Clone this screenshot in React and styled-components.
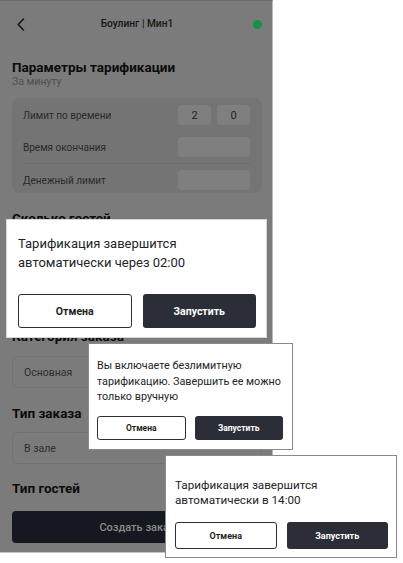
import styled, { createGlobalStyle } from "styled-components";

const GlobalStyle = createGlobalStyle`
  html, body {
    margin: 0;
    padding: 0;
    background: #fff;
  }
  body {
    font-family: Roboto, "Noto Sans", "Liberation Sans", sans-serif;
  }
  * {
    box-sizing: border-box;
  }
`;

const dialogs = [
  {
    id: "timer",
    text: "Тарификация завершится автоматически через 02:00",
    box: { left: 6, top: 219, width: 261, height: 119 },
    pad: "14px 10px 9px 11px",
    font: 13,
    line: 19,
    btnH: 34,
    btnFont: 10.5,
    gap: 11,
    border: "#d6d6d6",
  },
  {
    id: "unlimited",
    text: "Вы включаете безлимитную тарификацию. Завершить ее можно только вручную",
    box: { left: 88, top: 343, width: 205, height: 107 },
    pad: "14px 9px 9px 8px",
    font: 10.8,
    line: 15.5,
    btnH: 24,
    btnFont: 8.5,
    gap: 9,
    border: "#8a8a8a",
  },
  {
    id: "endtime",
    text: "Тарификация завершится автоматически в 14:00",
    box: { left: 165, top: 455, width: 232, height: 103 },
    pad: "22px 8px 8px 9px",
    font: 11.7,
    line: 15,
    btnH: 27,
    btnFont: 9,
    gap: 10,
    border: "#8a8a8a",
  },
];

function App() {
  return (
    <Page>
      <GlobalStyle />
      <Phone>
        <Header>
          <BackButton>
            <svg width="8" height="13" viewBox="0 0 8 13" fill="none">
              <path
                d="M6.5 1 L1.2 6.5 L6.5 12"
                stroke="#151515"
                strokeWidth="1.5"
                strokeLinecap="round"
                strokeLinejoin="round"
              />
            </svg>
          </BackButton>
          <HeaderTitle>Боулинг | Мин1</HeaderTitle>
          <StatusDot />
        </Header>

        <PageTitle>Параметры тарификации</PageTitle>
        <Subtitle>За минуту</Subtitle>

        <Card>
          <Row>
            <RowLabel>Лимит по времени</RowLabel>
            <Inputs>
              <Field $w={33}>2</Field>
              <Field $w={33}>0</Field>
            </Inputs>
          </Row>
          <Row $gap>
            <RowLabel>Время окончания</RowLabel>
            <Field $w={72} />
          </Row>
          <Divider />
          <Row>
            <RowLabel>Денежный лимит</RowLabel>
            <Field $w={72} />
          </Row>
        </Card>

        <SectionTitle $mt={17}>Сколько гостей</SectionTitle>
        <Select $mt={10} />
        <Select $mt={10} />

        <SectionTitle $mt={18}>Категория заказа</SectionTitle>
        <Select $mt={12}>Основная</Select>

        <SectionTitle $mt={17}>Тип заказа</SectionTitle>
        <Select $mt={11}>В зале</Select>

        <SectionTitle $mt={16}>Тип гостей</SectionTitle>

        <CreateButton>Создать заказ</CreateButton>
      </Phone>

      {dialogs.map((d) => (
        <Dialog key={d.id} $box={d.box} $pad={d.pad} $border={d.border}>
          <DialogText $font={d.font} $line={d.line}>
            {d.text}
          </DialogText>
          <DialogActions $gap={d.gap}>
            <CancelButton $h={d.btnH} $font={d.btnFont}>
              Отмена
            </CancelButton>
            <StartButton $h={d.btnH} $font={d.btnFont}>
              Запустить
            </StartButton>
          </DialogActions>
        </Dialog>
      ))}
    </Page>
  );
}

export default App;

const Page = styled.div`
  position: relative;
  width: 403px;
  height: 563px;
  background: #fff;
  overflow: hidden;
`;

const Phone = styled.div`
  width: 273px;
  height: 553px;
  display: flex;
  flex-direction: column;
  padding: 0 10px 10px 12px;
  background: #7b7b7b;
  border-top: 1px solid #6a6a6a;
  border-right: 1px solid #b8b8b8;
  border-bottom: 1px solid #c6c6c6;
  overflow: hidden;
`;

const Header = styled.header`
  height: 45px;
  flex-shrink: 0;
  display: grid;
  grid-template-columns: 24px 1fr 24px;
  align-items: center;
`;

const BackButton = styled.div`
  display: flex;
  align-items: center;
  padding-left: 5px;
  padding-top: 1px;
`;

const HeaderTitle = styled.div`
  text-align: center;
  font-size: 10.2px;
  font-weight: 500;
  color: #161616;
`;

const StatusDot = styled.div`
  justify-self: end;
  width: 9px;
  height: 9px;
  margin-top: 1px;
  border-radius: 50%;
  background: #17914a;
`;

const PageTitle = styled.h1`
  margin: 13px 0 0;
  font-size: 13.5px;
  line-height: 16px;
  font-weight: 700;
  color: #0c0c0c;
`;

const Subtitle = styled.div`
  font-size: 10.5px;
  line-height: 14px;
  color: #4e4e4e;
`;

const Card = styled.div`
  margin-top: 9px;
  padding: 7px 12px 3px 11px;
  display: flex;
  flex-direction: column;
  border-radius: 8px;
  background: #747474;
`;

const Row = styled.div`
  height: 20px;
  display: flex;
  align-items: center;
  justify-content: space-between;
  margin-top: ${(p) => (p.$gap ? "12px" : "0")};
`;

const RowLabel = styled.span`
  font-size: 10px;
  color: #2a2a2a;
`;

const Inputs = styled.div`
  display: flex;
  gap: 6px;
`;

const Field = styled.div`
  width: ${(p) => p.$w}px;
  height: 20px;
  display: flex;
  align-items: center;
  justify-content: center;
  border-radius: 4px;
  background: #7f7f7f;
  font-size: 11px;
  color: #222;
`;

const Divider = styled.div`
  height: 1px;
  margin: 6px 0;
  background: #6b6b6b;
`;

const SectionTitle = styled.h2`
  margin: ${(p) => p.$mt}px 0 0;
  font-size: 13.5px;
  line-height: 16px;
  font-weight: 700;
  color: #0c0c0c;
`;

const Select = styled.div`
  margin-top: ${(p) => p.$mt}px;
  height: 32px;
  flex-shrink: 0;
  display: flex;
  align-items: center;
  padding-left: 11px;
  border: 1px solid #727272;
  border-radius: 6px;
  background: #7b7b7b;
  font-size: 10.5px;
  color: #2e2e2e;
`;

const CreateButton = styled.div`
  margin-top: 15px;
  height: 32px;
  flex-shrink: 0;
  display: flex;
  align-items: center;
  justify-content: center;
  border-radius: 4px;
  background: #15181e;
  font-size: 11px;
  font-weight: 500;
  color: #8c8c8c;
`;

const Dialog = styled.div`
  position: absolute;
  left: ${(p) => p.$box.left}px;
  top: ${(p) => p.$box.top}px;
  width: ${(p) => p.$box.width}px;
  height: ${(p) => p.$box.height}px;
  display: flex;
  flex-direction: column;
  justify-content: space-between;
  padding: ${(p) => p.$pad};
  background: #fff;
  border: 1px solid ${(p) => p.$border};
`;

const DialogText = styled.p`
  margin: 0;
  font-size: ${(p) => p.$font}px;
  line-height: ${(p) => p.$line}px;
  color: #222428;
`;

const DialogActions = styled.div`
  display: grid;
  grid-template-columns: 1fr 1fr;
  gap: ${(p) => p.$gap}px;
`;

const ActionButton = styled.div`
  height: ${(p) => p.$h}px;
  display: flex;
  align-items: center;
  justify-content: center;
  border-radius: 3px;
  font-size: ${(p) => p.$font}px;
  font-weight: 700;
`;

const CancelButton = styled(ActionButton)`
  background: #fff;
  border: 1px solid #2b2e35;
  color: #1e1f22;
`;

const StartButton = styled(ActionButton)`
  background: #2b2e36;
  color: #fff;
`;
